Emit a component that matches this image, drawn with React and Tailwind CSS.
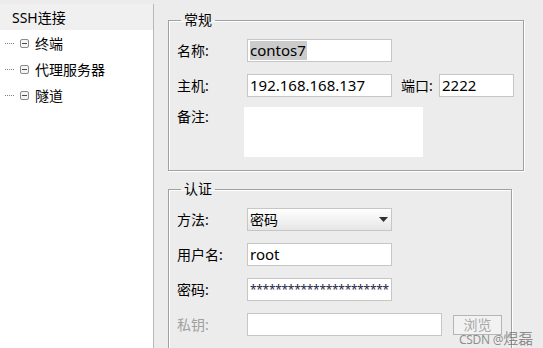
import React from "react";

const font = { fontFamily: '"Noto Sans", "Noto Sans CJK SC", sans-serif' };

function TreeIcon() {
  return (
    <svg width="9" height="9" viewBox="0 0 9 9" className="shrink-0">
      <rect x="0.5" y="0.5" width="8" height="8" rx="1.5" fill="#f4f4f4" stroke="#8a8a8a" />
      <line x1="2" y1="4.5" x2="7" y2="4.5" stroke="#4a4a4a" />
    </svg>
  );
}

function TreeItem({ label }) {
  return (
    <div className="flex h-[26px] items-center">
      <div className="ml-[5px] w-[9px] border-t border-dotted border-[#808080]" />
      <div className="ml-[6px]"><TreeIcon /></div>
      <span className="ml-[6px] text-[14px] text-black">{label}</span>
    </div>
  );
}

function Label({ children, gray }) {
  return (
    <div className={"w-[70px] shrink-0 text-[14px] leading-[20px] " + (gray ? "text-[#a0a0a0]" : "text-black")}>
      {children}
    </div>
  );
}

function Input({ w, children }) {
  return (
    <div
      className="flex h-[23px] shrink-0 items-center overflow-hidden border border-[#c6c6c6] bg-white pl-[1px] text-[15px] text-black"
      style={{ width: w }}
    >
      {children}
    </div>
  );
}

function Group({ title, className, children }) {
  return (
    <fieldset
      className={"ml-[14px] border border-[#a0a0a0] pt-[11px] pl-[8px] shadow-[inset_1px_1px_0_#ffffff,1px_1px_0_#ffffff] " + className}
    >
      <legend className="ml-[4px] px-[3px] text-[14px] leading-[16px] text-black">{title}</legend>
      <div className="flex flex-col">{children}</div>
    </fieldset>
  );
}

export default function App() {
  return (
    <div className="relative flex h-[348px] w-[543px] overflow-hidden bg-[#ececec]" style={font}>
      {/* Left tree */}
      <div className="mt-[4px] w-[154px] shrink-0 border-r border-[#b8b8b8] bg-white">
        <div className="flex h-[26px] items-center bg-[#f0f0f0] pl-[12px] text-[14px] text-black">SSH连接</div>
        <TreeItem label="终端" />
        <TreeItem label="代理服务器" />
        <TreeItem label="隧道" />
      </div>

      {/* Right content */}
      <div className="flex flex-col">
        <Group title="常规" className="mt-[12px] w-[356px] pb-[13px]">
          <div className="flex h-[23px] items-center">
            <Label>名称:</Label>
            <Input w={145}>
              <span className="ml-[1px] bg-[#cbcbcb] pr-[1px] leading-[19px]">contos7</span>
            </Input>
          </div>
          <div className="mt-[12px] flex h-[23px] items-center">
            <Label>主机:</Label>
            <Input w={145}>
              <span className="ml-[1px]">192.168.168.137</span>
            </Input>
            <div className="ml-[9px] w-[38px] text-[14px] text-black">端口:</div>
            <Input w={75}>
              <span className="ml-[1px]">2222</span>
            </Input>
          </div>
          <div className="mt-[10px] flex items-start">
            <Label>备注:</Label>
            <div className="-ml-[3px] h-[50px] w-[179px] bg-white" />
          </div>
        </Group>

        <Group title="认证" className="mt-[10px] w-[344px] pb-[20px]">
          <div className="flex h-[23px] items-center">
            <Label>方法:</Label>
            <div className="flex h-[23px] w-[145px] items-center justify-between border border-[#c6c6c6] bg-gradient-to-b from-white to-[#e6e6e6] pl-[2px] pr-[3px] text-[14px] text-black">
              <span>密码</span>
              <svg width="9" height="5" viewBox="0 0 9 5">
                <path d="M0 0 H9 L4.5 5 Z" fill="#333" />
              </svg>
            </div>
          </div>
          <div className="mt-[12px] flex h-[23px] items-center">
            <Label>用户名:</Label>
            <Input w={145}>
              <span className="ml-[1px]">root</span>
            </Input>
          </div>
          <div className="mt-[12px] flex h-[23px] items-center">
            <Label>密码:</Label>
            <Input w={145}>
              <span className="ml-[1px] whitespace-nowrap text-[12px] tracking-[-0.3px] text-[#1c2440]">**********************</span>
            </Input>
          </div>
          <div className="mt-[12px] flex h-[23px] items-center">
            <Label gray>私钥:</Label>
            <Input w={195} />
            <div className="ml-[11px] flex h-[20px] w-[49px] items-center justify-center border border-[#b5b5b5] bg-[#f2f2f2] text-[14px] text-[#a8a8a8]">
              浏览
            </div>
          </div>
        </Group>
      </div>

      {/* Watermark */}
      <div className="pointer-events-none absolute left-[459px] top-[327px] flex items-baseline whitespace-nowrap text-[rgba(110,110,110,0.75)]">
        <span className="text-[12px] tracking-[-0.3px]">CSDN @</span>
        <span className="text-[15px]">煜磊</span>
      </div>
    </div>
  );
}
